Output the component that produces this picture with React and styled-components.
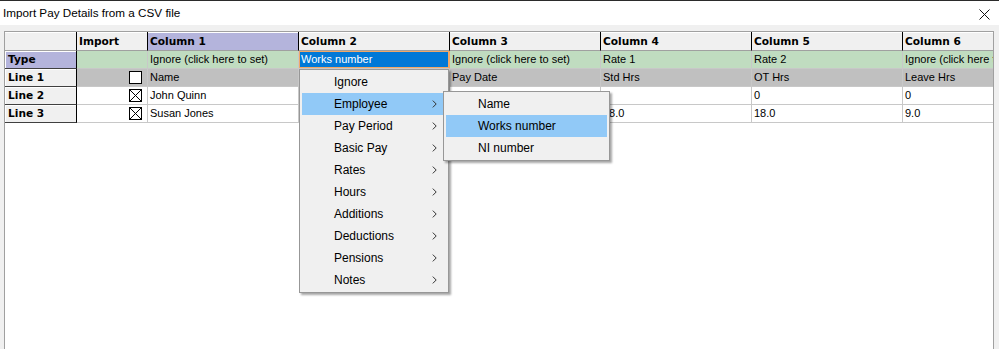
import React from 'react';
import styled, { createGlobalStyle, css } from 'styled-components';

const Global = createGlobalStyle`
  html, body { margin: 0; padding: 0; background: #f0f0f0; }
  body { font-family: "Liberation Sans", Arial, sans-serif; }
`;

const Window = styled.div`
  position: relative;
  width: 999px;
  height: 349px;
  overflow: hidden;
  background: #f0f0f0;
  border-top: 1px solid #2b2b2b;
  box-sizing: border-box;
  display: flex;
  flex-direction: column;
`;

const TitleBar = styled.div`
  height: 24px;
  flex: none;
  background: #ffffff;
  display: flex;
  align-items: center;
  justify-content: space-between;
  padding: 0 9px 0 3px;
  font-family: "Liberation Sans", Arial, sans-serif;
  font-size: 11.7px;
  color: #000;
`;

const Title = styled.span`
  padding-bottom: 1px;
`;

const CloseIcon = styled.svg`
  width: 11px;
  height: 11px;
  margin-top: 3px;
`;

const Body = styled.div`
  flex: 1;
  padding: 6px 5px 0 4px;
  display: flex;
  min-height: 0;
`;

const GridBox = styled.div`
  flex: 1;
  background: #fff;
  border: 1px solid #a0a0a0;
  border-bottom: none;
  overflow: hidden;
`;

const Grid = styled.div`
  display: grid;
  grid-template-columns: 72px 71px 151px 151px 151px 151px 151px 151px;
  grid-auto-rows: 18px;
  grid-template-rows: 19px;
  font-family: "Liberation Sans", Arial, sans-serif;
  font-size: 11px;
  color: #000;
  width: max-content;
`;

const boldFont = css`
  font-family: "DejaVu Sans", Verdana, sans-serif;
  font-size: 10.6px;
  font-weight: bold;
`;

const Cell = styled.div`
  box-sizing: border-box;
  border-right: 1px solid #c8c8c8;
  border-bottom: 1px solid #c8c8c8;
  padding-left: 2px;
  line-height: 17px;
  white-space: nowrap;
  overflow: hidden;
  background: ${(p) => p.$bg || '#fff'};
  display: flex;
  align-items: center;

  ${(p) =>
    p.$kind === 'colHeader' &&
    css`
      ${boldFont};
      border-right: 1px solid #000;
      border-bottom: 1px solid #a0a0a0;
      box-shadow: inset 0 1px 0 #fff;
      line-height: 18px;
    `}

  ${(p) =>
    p.$kind === 'rowHeader' &&
    css`
      ${boldFont};
      padding-left: 3px;
      border-right: 1px solid #000;
      border-bottom: 1px solid #404040;
      box-shadow: inset 1px 1px 0 #fff;
    `}

  ${(p) =>
    p.$kind === 'check' &&
    css`
      justify-content: flex-end;
      padding-right: 5px;
    `}

  ${(p) =>
    p.$selected &&
    css`
      background: #0078d7;
      color: #fff;
      box-shadow: inset 0 0 0 1px #f0a868;
      border-right-color: #f0a868;
    `}
`;

const CheckBox = ({ checked }) => (
  <svg width="13" height="13" viewBox="0 0 13 13">
    <rect x="0.5" y="0.5" width="12" height="12" fill="#fff" stroke="#000" />
    {checked && (
      <path d="M1 1 L12 12 M12 1 L1 12" stroke="#000" strokeWidth="1" />
    )}
  </svg>
);

const Menu = styled.div`
  position: absolute;
  left: ${(p) => p.$x}px;
  top: ${(p) => p.$y}px;
  width: ${(p) => p.$w}px;
  box-sizing: border-box;
  background: #f0f0f0;
  border: 1px solid #979797;
  padding: 1px 2px;
  box-shadow: 2px 2px 2px rgba(0, 0, 0, 0.35);
  font-family: "Liberation Sans", Arial, sans-serif;
  font-size: 12px;
  color: #000;
`;

const MenuItem = styled.div`
  height: 22px;
  display: flex;
  align-items: center;
  justify-content: space-between;
  padding: 0 9px 0 32px;
  background: ${(p) => (p.$active ? '#91c9f7' : 'transparent')};
`;

const Chevron = () => (
  <svg width="5" height="8" viewBox="0 0 5 8">
    <polyline points="0.8,0.6 4.2,4 0.8,7.4" fill="none" stroke="#333" strokeWidth="1" />
  </svg>
);

const colors = {
  lavender: '#b4b4dc',
  green: '#c0dcc0',
  gray: '#c0c0c0',
  face: '#f0f0f0',
};

const headers = ['Column 1', 'Column 2', 'Column 3', 'Column 4', 'Column 5', 'Column 6'];

const rows = [
  {
    label: 'Type',
    labelBg: colors.lavender,
    importBg: colors.green,
    check: null,
    bg: colors.green,
    cells: ['Ignore (click here to set)', 'Works number', 'Ignore (click here to set)', 'Rate 1', 'Rate 2', 'Ignore (click here to set)'],
    selected: 1,
  },
  {
    label: 'Line 1',
    importBg: colors.gray,
    check: false,
    bg: colors.gray,
    cells: ['Name', 'Works No', 'Pay Date', 'Std Hrs', 'OT Hrs', 'Leave Hrs'],
  },
  {
    label: 'Line 2',
    check: true,
    cells: ['John Quinn', '1', '31/03/2024', '0', '0', '0'],
  },
  {
    label: 'Line 3',
    check: true,
    cells: ['Susan Jones', '2', '31/03/2024', '18.0', '18.0', '9.0'],
  },
];

const mainMenu = [
  { label: 'Ignore' },
  { label: 'Employee', sub: true, active: true },
  { label: 'Pay Period', sub: true },
  { label: 'Basic Pay', sub: true },
  { label: 'Rates', sub: true },
  { label: 'Hours', sub: true },
  { label: 'Additions', sub: true },
  { label: 'Deductions', sub: true },
  { label: 'Pensions', sub: true },
  { label: 'Notes', sub: true },
];

const subMenu = [
  { label: 'Name' },
  { label: 'Works number', active: true },
  { label: 'NI number' },
];

export default function App() {
  return (
    <>
      <Global />
      <Window>
        <TitleBar>
          <Title>Import Pay Details from a CSV file</Title>
          <CloseIcon viewBox="0 0 11 11">
            <path d="M0.5 0.5 L10.5 10.5 M10.5 0.5 L0.5 10.5" stroke="#111" strokeWidth="1" />
          </CloseIcon>
        </TitleBar>
        <Body>
          <GridBox>
            <Grid>
              <Cell $kind="colHeader" $bg={colors.face} />
              <Cell $kind="colHeader" $bg={colors.face}>Import</Cell>
              {headers.map((h, i) => (
                <Cell key={h} $kind="colHeader" $bg={i === 0 ? colors.lavender : colors.face}>
                  {h}
                </Cell>
              ))}
              {rows.map((r) => (
                <React.Fragment key={r.label}>
                  <Cell $kind="rowHeader" $bg={r.labelBg || colors.face}>
                    {r.label}
                  </Cell>
                  <Cell $kind="check" $bg={r.importBg}>
                    {r.check !== null && <CheckBox checked={r.check} />}
                  </Cell>
                  {r.cells.map((c, i) => (
                    <Cell key={i} $bg={r.bg} $selected={r.selected === i}>
                      {c}
                    </Cell>
                  ))}
                </React.Fragment>
              ))}
            </Grid>
          </GridBox>
        </Body>

        <Menu $x={299} $y={68} $w={150}>
          {mainMenu.map((m) => (
            <MenuItem key={m.label} $active={m.active}>
              <span>{m.label}</span>
              {m.sub && <Chevron />}
            </MenuItem>
          ))}
        </Menu>
        <Menu $x={443} $y={90} $w={167}>
          {subMenu.map((m) => (
            <MenuItem key={m.label} $active={m.active}>
              <span>{m.label}</span>
            </MenuItem>
          ))}
        </Menu>
      </Window>
    </>
  );
}
